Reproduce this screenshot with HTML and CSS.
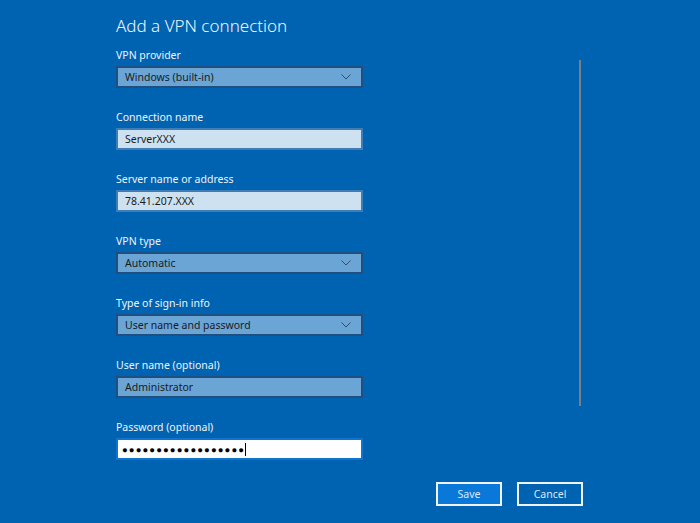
FILE: index.html
```html
<!DOCTYPE html>
<html lang="en">
<head>
    <meta charset="UTF-8">
    <title>Add a VPN connection</title>
    <link rel="stylesheet" href="styles.css">
</head>
<body>
    <div class="page">
        <div class="main">
            <form class="vpn-form">
                <h1>Add a VPN connection</h1>

                <label>VPN provider</label>
                <div class="field select">
                    <span>Windows (built-in)</span>
                    <svg class="chevron" width="10" height="6" viewBox="0 0 10 6"><path d="M0.5 0.5 L5 5 L9.5 0.5" fill="none" stroke="#2d4f73" stroke-width="1"/></svg>
                </div>

                <label>Connection name</label>
                <div class="field text"><span>ServerXXX</span></div>

                <label>Server name or address</label>
                <div class="field text"><span>78.41.207.XXX</span></div>

                <label>VPN type</label>
                <div class="field select">
                    <span>Automatic</span>
                    <svg class="chevron" width="10" height="6" viewBox="0 0 10 6"><path d="M0.5 0.5 L5 5 L9.5 0.5" fill="none" stroke="#2d4f73" stroke-width="1"/></svg>
                </div>

                <label>Type of sign-in info</label>
                <div class="field select">
                    <span>User name and password</span>
                    <svg class="chevron" width="10" height="6" viewBox="0 0 10 6"><path d="M0.5 0.5 L5 5 L9.5 0.5" fill="none" stroke="#2d4f73" stroke-width="1"/></svg>
                </div>

                <label>User name (optional)</label>
                <div class="field filled"><span>Administrator</span></div>

                <label>Password (optional)</label>
                <div class="field focused"><span class="dots">●●●●●●●●●●●●●●●●●●</span><span class="caret"></span></div>
            </form>
            <div class="scrollbar"></div>
        </div>
        <div class="actions">
            <button class="btn primary">Save</button>
            <button class="btn">Cancel</button>
        </div>
    </div>
</body>
</html>
```

FILE: styles.css
```css
body {
    margin: 0;
    background-color: #0063b1;
    font-family: 'Noto Sans', 'Open Sans', sans-serif;
    color: #fff;
    height: 523px;
    overflow: hidden;
}
.page {
    display: flex;
    flex-direction: column;
}
.main {
    display: flex;
}
.vpn-form {
    display: flex;
    flex-direction: column;
    margin-left: 116px;
    width: 247px;
}
h1 {
    font-size: 17px;
    font-weight: 300;
    line-height: 27px;
    margin: 12px 0 0;
    color: #f2f6fa;
}
label {
    font-size: 10.5px;
    line-height: 16px;
    margin-top: 8px;
    color: #eef3f8;
}
.field + label {
    margin-top: 21px;
}
.field {
    box-sizing: border-box;
    height: 22px;
    margin-top: 3px;
    padding: 0 7px;
    display: flex;
    align-items: center;
    justify-content: space-between;
    font-size: 10.5px;
    color: #1b1b1b;
    border: 2px solid #1f4f7e;
}
.select, .filled {
    background-color: #6aa5d6;
}
.text {
    background-color: #cde1f1;
    border-color: #3f7db6;
}
.focused {
    background-color: #fff;
    border-color: #1174cc;
    justify-content: flex-start;
    padding-left: 4px;
}
.dots {
    font-size: 9.5px;
    letter-spacing: 1.1px;
    color: #000;
}
.caret {
    width: 1px;
    height: 13px;
    background-color: #000;
    margin-left: 0;
}
.chevron {
    margin-right: 3px;
}
.scrollbar {
    width: 2px;
    height: 346px;
    margin-top: 60px;
    margin-left: 216px;
    background-color: #7a7f86;
}
.actions {
    display: flex;
    gap: 15px;
    margin-top: 22px;
    margin-left: 436px;
}
.btn {
    box-sizing: border-box;
    width: 66px;
    height: 24px;
    border: 2px solid #f0f4f8;
    background-color: transparent;
    color: #dce8f4;
    font-family: 'Noto Sans', 'Open Sans', sans-serif;
    font-size: 10.5px;
    padding: 0;
}
.primary {
    background-color: #0a78d8;
}
```
